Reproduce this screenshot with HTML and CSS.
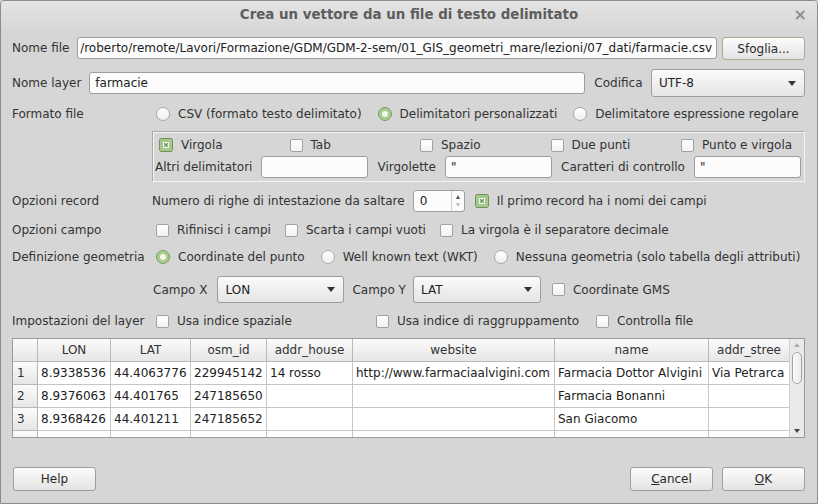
FILE: index.html
```html
<!DOCTYPE html>
<html>
<head>
<meta charset="utf-8">
<link rel="stylesheet" href="styles.css">
</head>
<body>
<div class="window">
  <div class="titlebar">
    <span class="title">Crea un vettore da un file di testo delimitato</span>
    <span class="close">×</span>
  </div>
  <div class="content">
    <div class="row r-file">
      <span class="lbl">Nome file</span>
      <div class="input path"><span>/roberto/remote/Lavori/Formazione/GDM/GDM-2-sem/01_GIS_geometri_mare/lezioni/07_dati/farmacie.csv</span></div>
      <button class="btn browse">Sfoglia...</button>
    </div>
    <div class="row r-layer">
      <span class="lbl">Nome layer</span>
      <div class="input layer">farmacie</div>
      <span class="lbl codifica">Codifica</span>
      <div class="combo enc"><span>UTF-8</span><i class="tri"></i></div>
    </div>
    <div class="row r-format">
      <span class="rowlbl">Formato file</span>
      <div class="opts">
        <span class="item"><i class="rb"></i>CSV (formato testo delimitato)</span>
        <span class="item"><i class="rb on"></i>Delimitatori personalizzati</span>
        <span class="item"><i class="rb"></i>Delimitatore espressione regolare</span>
      </div>
    </div>
    <div class="frame">
      <div class="delims">
        <span class="item"><svg class="cbs" width="14" height="14" viewBox="0 0 14 14"><rect x="0.5" y="0.5" width="13" height="13" rx="2" fill="#a6c98c" stroke="#6f8f57"/><rect x="4" y="4" width="6" height="6" fill="#f4f8ef"/><path d="M5.2 5.2 L8.8 8.8 M8.8 5.2 L5.2 8.8" stroke="#6f8f57" stroke-width="1.3"/></svg>Virgola</span>
        <span class="item"><i class="cb"></i>Tab</span>
        <span class="item"><i class="cb"></i>Spazio</span>
        <span class="item"><i class="cb"></i>Due punti</span>
        <span class="item"><i class="cb"></i>Punto e virgola</span>
      </div>
      <div class="others">
        <span>Altri delimitatori</span>
        <div class="input small"></div>
        <span>Virgolette</span>
        <div class="input small">"</div>
        <span>Caratteri di controllo</span>
        <div class="input small">"</div>
      </div>
    </div>
    <div class="row r-record">
      <span class="rowlbl">Opzioni record</span>
      <span class="nrighe">Numero di righe di intestazione da saltare</span>
      <div class="spin"><span class="spinval">0</span><span class="spinbtns"><i class="sup"></i><i class="sdown"></i></span></div>
      <span class="item firstrec"><svg class="cbs" width="14" height="14" viewBox="0 0 14 14"><rect x="0.5" y="0.5" width="13" height="13" rx="2" fill="#a6c98c" stroke="#6f8f57"/><rect x="4" y="4" width="6" height="6" fill="#f4f8ef"/><path d="M5.2 5.2 L8.8 8.8 M8.8 5.2 L5.2 8.8" stroke="#6f8f57" stroke-width="1.3"/></svg>Il primo record ha i nomi dei campi</span>
    </div>
    <div class="row r-campo">
      <span class="rowlbl">Opzioni campo</span>
      <div class="opts">
        <span class="item"><i class="cb"></i>Rifinisci i campi</span>
        <span class="item"><i class="cb"></i>Scarta i campi vuoti</span>
        <span class="item"><i class="cb"></i>La virgola è il separatore decimale</span>
      </div>
    </div>
    <div class="row r-geom">
      <span class="rowlbl">Definizione geometria</span>
      <div class="opts">
        <span class="item"><i class="rb on"></i>Coordinate del punto</span>
        <span class="item"><i class="rb"></i>Well known text (WKT)</span>
        <span class="item"><i class="rb"></i>Nessuna geometria (solo tabella degli attributi)</span>
      </div>
    </div>
    <div class="row r-xy">
      <span class="lbl">Campo X</span>
      <div class="combo xy xfirst"><span>LON</span><i class="tri"></i></div>
      <span class="lbl">Campo Y</span>
      <div class="combo xy ysecond"><span>LAT</span><i class="tri"></i></div>
      <span class="item gms"><i class="cb"></i>Coordinate GMS</span>
    </div>
    <div class="row r-layeropts">
      <span class="rowlbl">Impostazioni del layer</span>
      <div class="lgrid">
        <span class="item"><i class="cb"></i>Usa indice spaziale</span>
        <span class="item"><i class="cb"></i>Usa indice di raggruppamento</span>
        <span class="item"><i class="cb"></i>Controlla file</span>
      </div>
    </div>
    <div class="tablewrap">
      <div class="grid">
        <div class="hc"></div><div class="hc">LON</div><div class="hc">LAT</div><div class="hc">osm_id</div><div class="hc">addr_house</div><div class="hc">website</div><div class="hc">name</div><div class="hc">addr_stree</div>
        <div class="rh">1</div><div class="c">8.9338536</div><div class="c">44.4063776</div><div class="c">229945142</div><div class="c">14 rosso</div><div class="c">http://www.farmaciaalvigini.com</div><div class="c">Farmacia Dottor Alvigini</div><div class="c">Via Petrarca</div>
        <div class="rh">2</div><div class="c">8.9376063</div><div class="c">44.401765</div><div class="c">247185650</div><div class="c"></div><div class="c"></div><div class="c">Farmacia Bonanni</div><div class="c"></div>
        <div class="rh">3</div><div class="c">8.9368426</div><div class="c">44.401211</div><div class="c">247185652</div><div class="c"></div><div class="c"></div><div class="c">San Giacomo</div><div class="c"></div>
        <div class="rh"></div><div class="c"></div><div class="c"></div><div class="c"></div><div class="c"></div><div class="c"></div><div class="c"></div><div class="c"></div>
      </div>
      <div class="vscroll">
        <i class="sarrow up"></i>
        <div class="track"><div class="handle"></div></div>
        <i class="sarrow down"></i>
      </div>
    </div>
    <div class="row r-buttons">
      <button class="btn">Help</button>
      <span class="spacer"></span>
      <button class="btn"><u>C</u>ancel</button>
      <button class="btn"><u>O</u>K</button>
    </div>
  </div>
</div>
</body>
</html>
```
FILE: styles.css
```css
html, body {
  margin: 0;
  padding: 0;
  background: #d6d6d6;
}
body {
  font-family: "DejaVu Sans", sans-serif;
  font-size: 12px;
  color: #333;
}
.window {
  width: 818px;
  height: 504px;
  box-sizing: border-box;
  border: 1px solid #8c8c8c;
  border-radius: 4px 4px 0 0;
  background: #d6d6d6;
  overflow: hidden;
  display: flex;
  flex-direction: column;
}
.titlebar {
  height: 27px;
  flex: none;
  display: grid;
  grid-template-columns: 1fr auto 1fr;
  align-items: center;
  background: linear-gradient(#e4e4e4, #d8d8d8);
}
.title {
  grid-column: 2;
  font-weight: bold;
  font-size: 13.4px;
  color: #5d5d5d;
}
.close {
  justify-self: end;
  margin-right: 10px;
  color: #8e8e8e;
  font-size: 16px;
  font-weight: bold;
}
.content {
  padding: 0 12px 0 11px;
  display: flex;
  flex-direction: column;
}
.row {
  display: flex;
  align-items: center;
  white-space: nowrap;
}
.lbl { flex: none; }
.rowlbl {
  width: 140px;
  flex: none;
}
.input {
  box-sizing: border-box;
  height: 22px;
  border: 1px solid #9d9d9d;
  border-radius: 3px;
  background: #fcfcfc;
  display: flex;
  align-items: center;
  padding: 0 5px;
  overflow: hidden;
  white-space: nowrap;
  color: #222;
}
.btn {
  box-sizing: border-box;
  width: 83px;
  height: 24px;
  border: 1px solid #9e9e9e;
  border-radius: 3px;
  background: linear-gradient(#fcfcfc, #e3e3e3);
  font-family: "DejaVu Sans", sans-serif;
  font-size: 12px;
  color: #2a2a2a;
  padding: 0;
  flex: none;
}
.combo {
  box-sizing: border-box;
  border: 1px solid #9d9d9d;
  border-radius: 3px;
  background: linear-gradient(#fbfbfb, #e4e4e4);
  display: flex;
  align-items: center;
  justify-content: space-between;
  padding: 0 8px 0 7px;
  color: #222;
  flex: none;
}
.tri {
  width: 0;
  height: 0;
  border-left: 4px solid transparent;
  border-right: 4px solid transparent;
  border-top: 5px solid #333;
}
.item {
  display: inline-flex;
  align-items: center;
  gap: 8px;
}
.cb {
  box-sizing: border-box;
  width: 13px;
  height: 13px;
  border: 1px solid #a2a2a2;
  border-radius: 2px;
  background: linear-gradient(#ffffff, #f2f2f2);
  flex: none;
}
.cbs { flex: none; }
.rb {
  box-sizing: border-box;
  width: 14px;
  height: 14px;
  border: 1px solid #a8a8a8;
  border-radius: 50%;
  background: linear-gradient(#ffffff, #f0f0f0);
  flex: none;
}
.rb.on {
  background: #a8cb8e;
  border-color: #7b9c63;
  display: grid;
  place-items: center;
}
.rb.on::after {
  content: "";
  width: 6px;
  height: 6px;
  border-radius: 50%;
  background: #f3f8ee;
}
.opts {
  display: flex;
  align-items: center;
  gap: 16px;
  margin-left: 4px;
}

/* row 1 */
.r-file {
  margin-top: 9px;
  height: 23px;
  align-items: flex-start;
}
.r-file .lbl { line-height: 22px; }
.path {
  flex: 1;
  min-width: 0;
  margin-left: 8px;
  justify-content: flex-end;
  padding: 0 4px 0 0;
}
.path span { flex: none; }
.browse {
  margin-left: 5px;
  height: 23px;
  border-color: #9fb28b;
}
/* row 2 */
.r-layer {
  margin-top: 9px;
  height: 28px;
}
.layer {
  width: 496px;
  margin-left: 8px;
  padding-left: 5px;
}
.codifica { margin-left: 9px; }
.enc {
  width: 154px;
  height: 28px;
  margin-left: auto;
}
/* formato */
.r-format {
  margin-top: 7px;
  height: 20px;
}
/* frame */
.frame {
  margin-top: 7px;
  margin-left: 140px;
  height: 51px;
  box-sizing: border-box;
  border: 1px solid #a9a9a9;
  border-right-color: #f4f4f4;
  border-bottom-color: #f4f4f4;
  box-shadow: inset 1px 1px 0 #f4f4f4;
  padding: 3px 3px 3px 2px;
}
.delims {
  display: grid;
  grid-template-columns: repeat(5, 130.5px);
  height: 20px;
  align-items: center;
  padding-left: 4px;
}
.others {
  margin-top: 1px;
  height: 22px;
  display: flex;
  align-items: center;
  justify-content: space-between;
  white-space: nowrap;
}
.small {
  width: 107px;
}
/* record */
.r-record {
  margin-top: 8px;
  height: 22px;
}
.spin {
  box-sizing: border-box;
  width: 52px;
  height: 22px;
  margin-left: 8px;
  border: 1px solid #9d9d9d;
  border-radius: 3px;
  background: #fcfcfc;
  display: flex;
  color: #222;
}
.spinval {
  flex: 1;
  padding-left: 6px;
  display: flex;
  align-items: center;
}
.spinbtns {
  width: 12px;
  border-left: 1px solid #d0d0d0;
  display: flex;
  flex-direction: column;
  align-items: center;
  justify-content: space-around;
  padding: 2px 0;
}
.sup {
  width: 0; height: 0;
  border-left: 2.5px solid transparent;
  border-right: 2.5px solid transparent;
  border-bottom: 4px solid #555;
}
.sdown {
  width: 0; height: 0;
  border-left: 2.5px solid transparent;
  border-right: 2.5px solid transparent;
  border-top: 4px solid #bdbdbd;
}
.firstrec { margin-left: 10px; }
/* campo */
.r-campo {
  margin-top: 8px;
  height: 20px;
}
.r-campo .opts { gap: 14px; }
.r-geom {
  margin-top: 7px;
  height: 20px;
}
.r-geom .opts { gap: 16px; }
/* XY */
.r-xy {
  margin-top: 9px;
  height: 27px;
  padding-left: 141px;
}
.xy {
  width: 127px;
  height: 27px;
}
.xfirst { margin: 0 8px 0 10px; }
.ysecond { margin: 0 9px 0 7px; width: 128px; }
.gms { margin-left: 2px; }
/* layer opts */
.r-layeropts {
  margin-top: 8px;
  height: 20px;
}
.lgrid {
  display: grid;
  grid-template-columns: 220px 220px 200px;
  margin-left: 4px;
}
/* table */
.tablewrap {
  margin-top: 7px;
  height: 100px;
  box-sizing: border-box;
  border: 1px solid #9a9a9a;
  display: flex;
  background: #fff;
  overflow: hidden;
}
.grid {
  display: grid;
  grid-template-columns: 25px 73px 80px 76px 86px 202px 154px 81px;
  grid-auto-rows: 23px;
  overflow: hidden;
  align-content: start;
}
.hc, .rh, .c {
  box-sizing: border-box;
  border-right: 1px solid #c6c6c6;
  border-bottom: 1px solid #c6c6c6;
  display: flex;
  align-items: center;
  white-space: nowrap;
  overflow: hidden;
}
.hc {
  justify-content: center;
  background: linear-gradient(#fbfbfb, #e6e6e6);
  color: #333;
  border-color: #b8b8b8;
}
.rh {
  background: linear-gradient(#fbfbfb, #e6e6e6);
  padding-left: 4px;
  border-color: #b8b8b8;
}
.c {
  padding-left: 3px;
  color: #222;
}
.vscroll {
  width: 15px;
  flex: none;
  display: flex;
  flex-direction: column;
  align-items: center;
  background: #e9e9e9;
  border-left: 1px solid #d0d0d0;
  box-sizing: border-box;
}
.sarrow {
  width: 0; height: 0;
  border-left: 3px solid transparent;
  border-right: 3px solid transparent;
  flex: none;
}
.sarrow.up {
  margin-top: 4px;
  border-bottom: 4px solid #b0b0b0;
}
.sarrow.down {
  margin-bottom: 4px;
  border-top: 4px solid #444;
}
.track {
  flex: 1;
  width: 100%;
  display: flex;
  justify-content: center;
  padding-top: 5px;
}
.handle {
  box-sizing: border-box;
  width: 10px;
  height: 32px;
  border: 1px solid #a4a4a4;
  border-radius: 5px;
  background: linear-gradient(90deg, #fafafa, #ececec);
}
/* buttons */
.r-buttons {
  margin-top: 29px;
  height: 24px;
  padding-left: 1px;
}
.spacer { flex: 1; }
.r-buttons .btn + .btn { margin-left: 9px; }
```
